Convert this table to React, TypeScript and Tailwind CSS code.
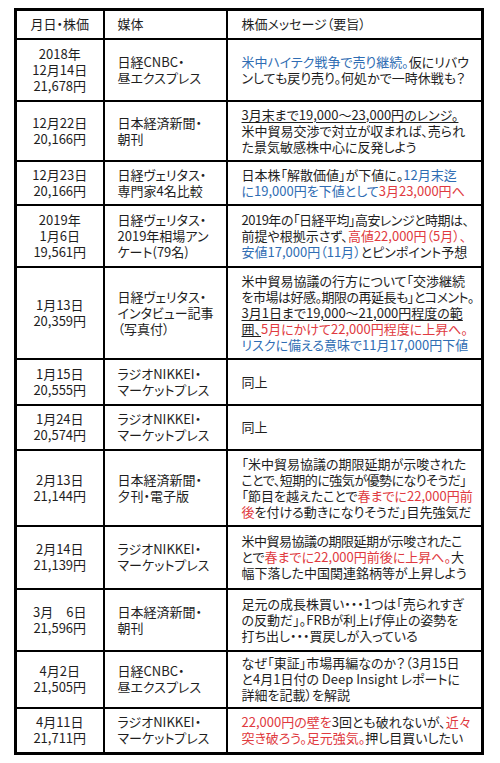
import type { ReactNode } from "react";

const B = ({ children }: { children: ReactNode }) => <span className="text-[#2f6db3]">{children}</span>;
const R = ({ children }: { children: ReactNode }) => <span className="text-[#e03a40]">{children}</span>;
const U = ({ children }: { children: ReactNode }) => <span className="underline decoration-1 underline-offset-2">{children}</span>;

// tight: message lines that need a little less tracking to stay inside the cell
type Row = { h: number; date: string[]; media: string[]; msg: ReactNode[]; tight?: number[] };

const rows: Row[] = [
  {
    h: 62,
    date: ["2018年", "12月14日", "21,678円"],
    media: ["日経CNBC・", "昼エクスプレス"],
    msg: [<><B>米中ハイテク戦争で売り継続。</B>仮にリバウ</>, "ンしても戻り売り。何処かで一時休戦も？"],
  },
  {
    h: 60,
    date: ["12月22日", "20,166円"],
    media: ["日本経済新聞・", "朝刊"],
    msg: [<U>3月末まで19,000～23,000円のレンジ。</U>, "米中貿易交渉で対立が収まれば、売られ", "た景気敏感株中心に反発しよう"],
  },
  {
    h: 44,
    date: ["12月23日", "20,166円"],
    media: ["日経ヴェリタス・", "専門家4名比較"],
    msg: [<>日本株「解散価値」が下値に。<B>12月末迄</B></>, <><B>に19,000円を下値として</B><R>3月23,000円へ</R></>],
  },
  {
    h: 62,
    date: ["2019年", "1月6日", "19,561円"],
    media: ["日経ヴェリタス・", "2019年相場アン", "ケート(79名)"],
    msg: [
      "2019年の「日経平均」高安レンジと時期は、",
      <>前提や根拠示さず、<R>高値22,000円（5月）、</R></>,
      <><B>安値17,000円（11月）</B>とピンポイント予想</>,
    ],
    tight: [0],
  },
  {
    h: 92,
    date: ["1月13日", "20,359円"],
    media: ["日経ヴェリタス・", "インタビュー記事", "（写真付）"],
    msg: [
      "米中貿易協議の行方について「交渉継続",
      "を市場は好感。期限の再延長も」とコメント。",
      <U>3月1日まで19,000～21,000円程度の範</U>,
      <><U>囲、</U><R>5月にかけて22,000円程度に上昇へ。</R></>,
      <B>リスクに備える意味で11月17,000円下値</B>,
    ],
    tight: [1],
  },
  { h: 46, date: ["1月15日", "20,555円"], media: ["ラジオNIKKEI・", "マーケットプレス"], msg: ["同上"] },
  { h: 45, date: ["1月24日", "20,574円"], media: ["ラジオNIKKEI・", "マーケットプレス"], msg: ["同上"] },
  {
    h: 76,
    date: ["2月13日", "21,144円"],
    media: ["日本経済新聞・", "夕刊・電子版"],
    msg: [
      "「米中貿易協議の期限延期が示唆された",
      "ことで、短期的に強気が優勢になりそうだ」",
      <>「節目を越えたことで<R>春までに22,000円前</R></>,
      <><R>後</R>を付ける動きになりそうだ」目先強気だ</>,
    ],
    tight: [1],
  },
  {
    h: 63,
    date: ["2月14日", "21,139円"],
    media: ["ラジオNIKKEI・", "マーケットプレス"],
    msg: [
      "米中貿易協議の期限延期が示唆されたこ",
      <>とで<R>春までに22,000円前後に上昇へ。</R>大</>,
      "幅下落した中国関連銘柄等が上昇しよう",
    ],
    tight: [0],
  },
  {
    h: 62,
    date: ["3月　6日", "21,596円"],
    media: ["日本経済新聞・", "朝刊"],
    msg: ["足元の成長株買い・・・1つは「売られすぎ", "の反動だ」。FRBが利上げ停止の姿勢を", "打ち出し・・・買戻しが入っている"],
  },
  {
    h: 57,
    date: ["4月2日", "21,505円"],
    media: ["日経CNBC・", "昼エクスプレス"],
    msg: ["なぜ「東証」市場再編なのか？（3月15日", "と4月1日付の Deep Insight レポートに", "詳細を記載）を解説"],
  },
  {
    h: 46,
    date: ["4月11日", "21,711円"],
    media: ["ラジオNIKKEI・", "マーケットプレス"],
    msg: [<><R>22,000円の壁を</R>3回とも破れないが、<R>近々</R></>, <><R>突き破ろう。足元強気。</R>押し目買いしたい</>],
  },
];

const cell = "border-2 border-black align-middle";

export default function App() {
  return (
    <main className="min-h-[763px] w-[500px] bg-white pl-[14px] pt-[8px] font-['Noto_Sans_CJK_JP','Noto_Sans',sans-serif] text-[13px] leading-[16px] text-[#1e1e1e] [font-feature-settings:'palt']">
      <table className="w-[467px] table-fixed border-collapse border-[3px] border-black">
        <colgroup>
          <col className="w-[88px]" />
          <col className="w-[123px]" />
          <col className="w-[256px]" />
        </colgroup>
        <thead>
          <tr className="h-[29px]">
            <th className={`${cell} text-center font-normal`}>月日・株価</th>
            <th className={`${cell} pl-[13px] text-left font-normal`}>媒体</th>
            <th className={`${cell} pl-[14px] text-left font-normal`}>株価メッセージ（要旨）</th>
          </tr>
        </thead>
        <tbody>
          {rows.map((r, i) => (
            <tr key={i} style={{ height: r.h }}>
              <td className={`${cell} text-center`}>
                {r.date.map((d) => <div key={d} className="whitespace-pre">{d}</div>)}
              </td>
              <td className={`${cell} pl-[13px]`}>
                {r.media.map((m) => <div key={m} className="whitespace-nowrap">{m}</div>)}
              </td>
              <td className={`${cell} pl-[14px]`}>
                {r.msg.map((m, j) => (
                  <div key={j} className={r.tight?.includes(j) ? "whitespace-nowrap tracking-[-0.5px]" : "whitespace-nowrap"}>
                    {m}
                  </div>
                ))}
              </td>
            </tr>
          ))}
        </tbody>
      </table>
    </main>
  );
}
